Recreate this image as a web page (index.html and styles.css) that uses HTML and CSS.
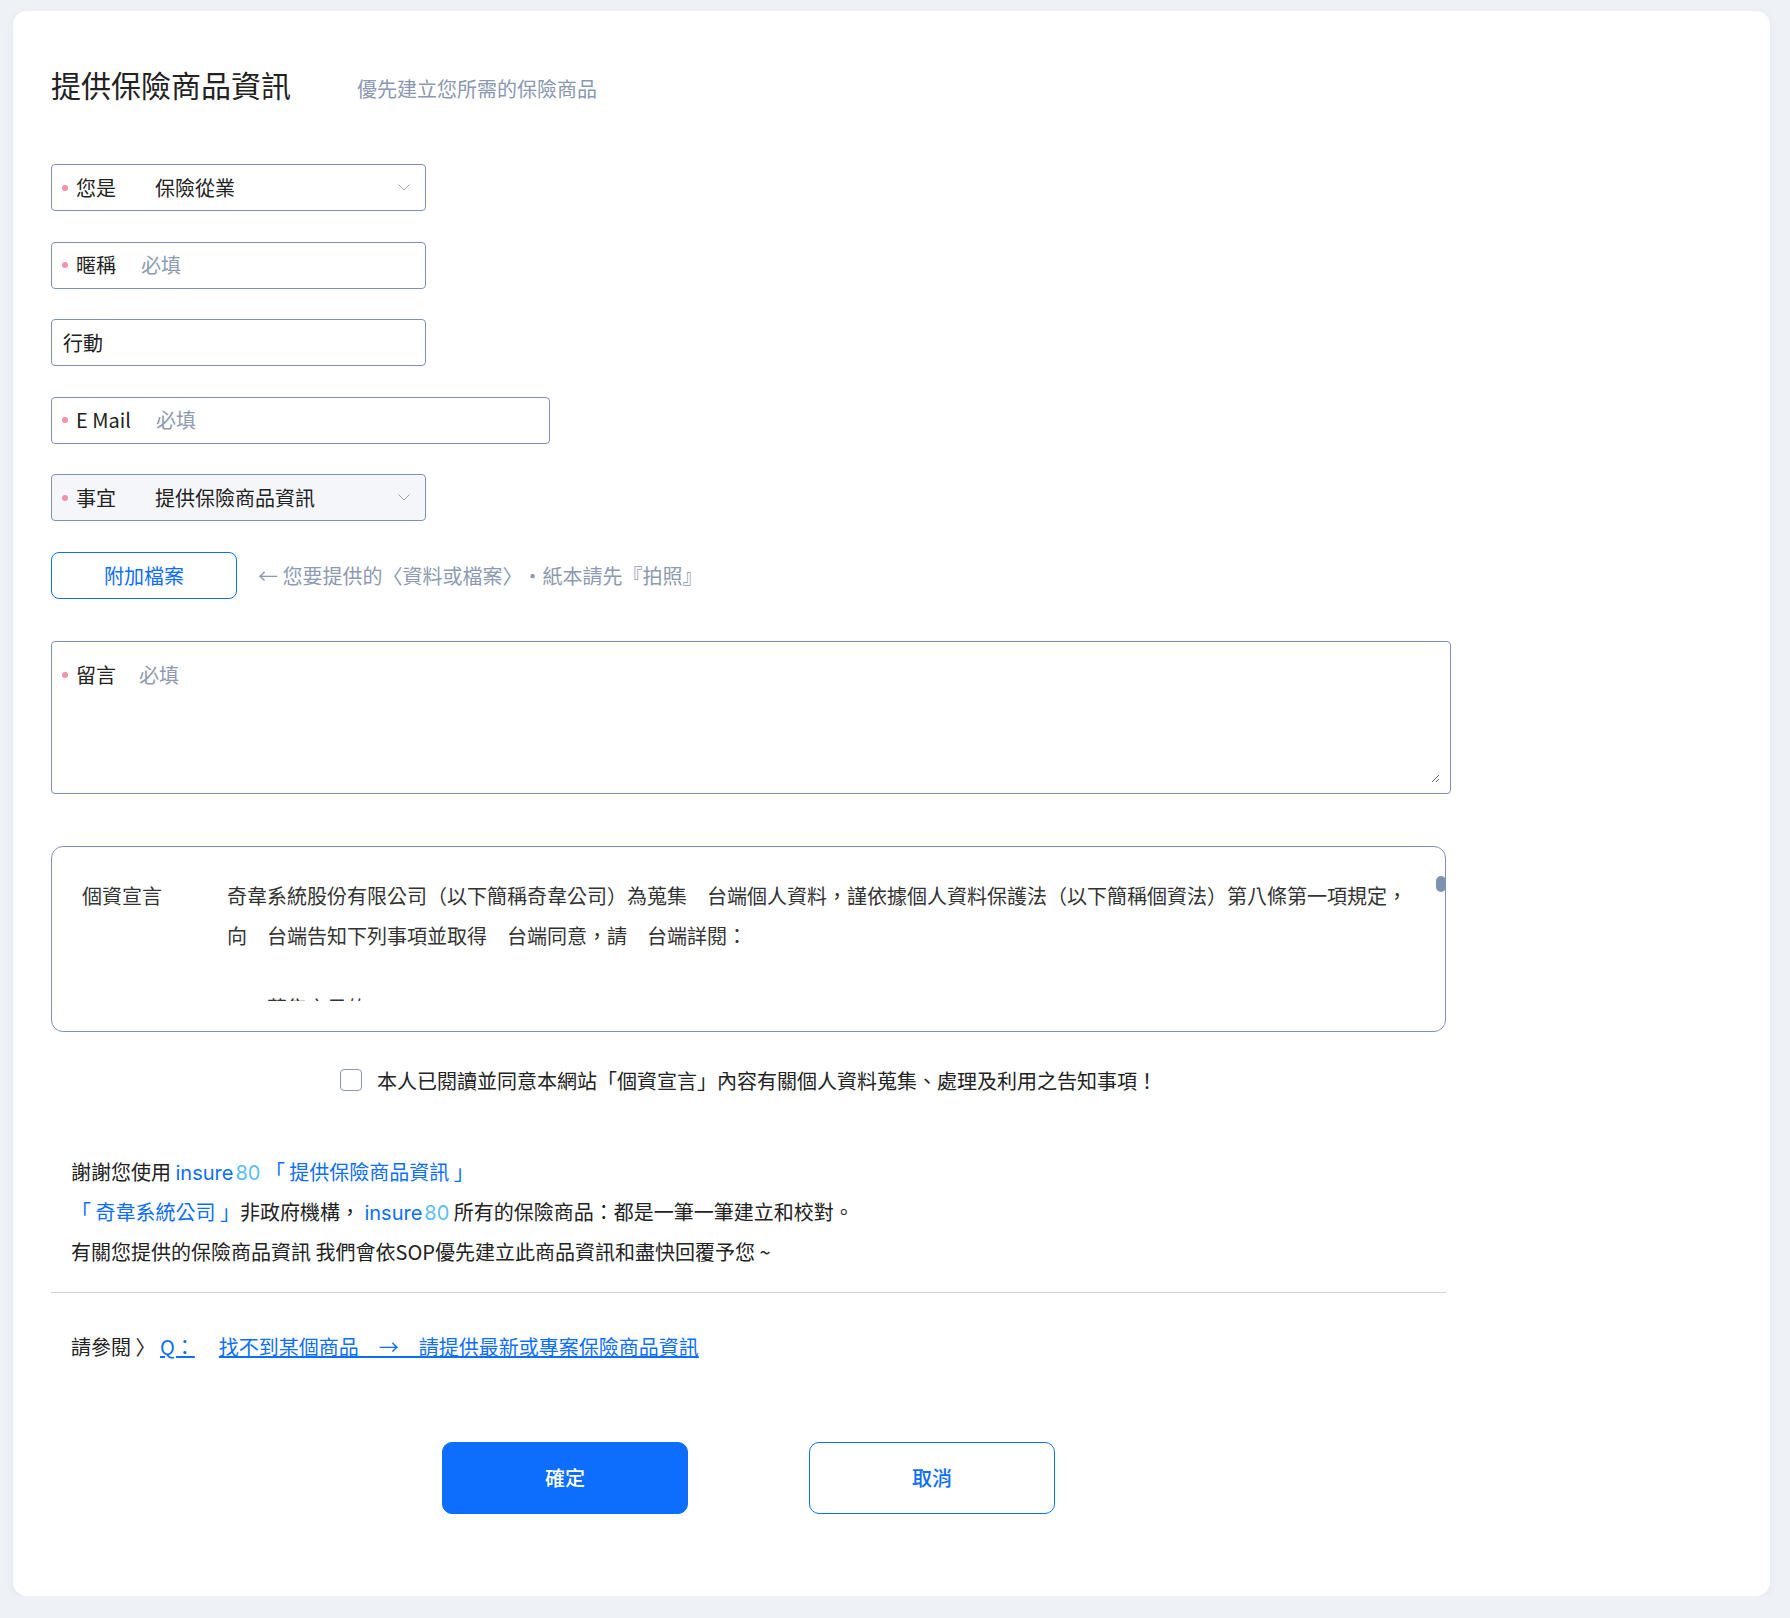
FILE: index.html
```html
<!DOCTYPE html>
<html lang="zh-Hant">
<head>
<meta charset="utf-8">
<title>提供保險商品資訊</title>
<link rel="stylesheet" href="styles.css">
</head>
<body>
<main class="card">
  <header class="head">
    <h1 class="title">提供保險商品資訊</h1>
    <span class="subtitle">優先建立您所需的保險商品</span>
  </header>

  <div class="field select">
    <span class="dot"></span><span class="lbl lbl-sel">您是</span>
    <span class="val">保險從業</span>
    <svg class="chev" width="12" height="7" viewBox="0 0 12 7"><polyline points="0.5,0.5 6,6 11.5,0.5" fill="none" stroke="#9aa4b4" stroke-width="1"/></svg>
  </div>

  <label class="field">
    <span class="dot"></span><span class="lbl">暱稱</span>
    <input type="text" placeholder="必填">
  </label>

  <label class="field plain">
    <input class="dark-ph" type="text" placeholder="行動">
  </label>

  <label class="field wide">
    <span class="dot"></span><span class="lbl">E Mail</span>
    <input type="text" placeholder="必填">
  </label>

  <div class="field select disabled">
    <span class="dot"></span><span class="lbl lbl-sel">事宜</span>
    <span class="val">提供保險商品資訊</span>
    <svg class="chev" width="12" height="7" viewBox="0 0 12 7"><polyline points="0.5,0.5 6,6 11.5,0.5" fill="none" stroke="#9aa4b4" stroke-width="1"/></svg>
  </div>

  <div class="attach">
    <button class="btn-attach" type="button">附加檔案</button>
    <span class="hint">← 您要提供的〈資料或檔案〉・紙本請先『拍照』</span>
  </div>

  <label class="area">
    <span class="dot dot-area"></span><span class="lbl lbl-area">留言</span>
    <textarea placeholder="必填"></textarea>
  </label>

  <section class="privacy">
    <div class="pv-label">個資宣言</div>
    <div class="pv-scroll">
      <p class="lead">奇韋系統股份有限公司（以下簡稱奇韋公司）為蒐集　台端個人資料，謹依據個人資料保護法（以下簡稱個資法）第八條第一項規定，向　台端告知下列事項並取得　台端同意，請　台端詳閱：</p>
      <p class="i1">蒐集之目的：</p>
      <p class="i2">提供保險商品資訊之建立、校對與查詢服務、會員管理、客戶服務、行銷及統計調查與分析。</p>
      <div class="gap"></div>
      <p class="i1">個人資料之類別：</p>
      <p class="i2">姓名、電子郵件、行動電話、職業及其他得以直接或間接方式識別　台端之個人資料。</p>
      <div class="gap"></div>
      <p class="i1">個人資料利用之期間、地區、對象及方式：</p>
      <p class="i2">期間：自　台端同意之日起至蒐集目的消失或本網站停止提供服務之日為止。</p>
      <p class="i2">地區：中華民國境內。</p>
      <p class="i2">對象：奇韋公司及與奇韋公司有業務往來之合作廠商。</p>
      <p class="i2">方式：以自動化或非自動化之方式，於蒐集目的範圍內合理利用。</p>
      <div class="gap"></div>
      <p class="i1">依個資法第三條規定，　台端就　台端之個人資料得行使下列權利：</p>
      <p class="i2">查詢或請求閱覽、請求製給複製本、請求補充或更正、請求停止蒐集、處理或利用、請求刪除。</p>
      <p class="i2">如欲行使上述權利，請以電子郵件與本公司聯繫，本公司將於接獲請求後儘速處理。</p>
      <div class="gap"></div>
      <p class="i1">台端不提供個人資料所致權益之影響：</p>
      <p class="i2">台端得自由選擇是否提供個人資料，若　台端拒絕提供，本網站將無法提供相關服務。</p>
      <div class="gap"></div>
      <p class="i1">本公司將以嚴密之措施保護　台端之個人資料，並依個資法及相關法令規定處理。</p>
      <p class="i2">本告知事項如有修訂，將公告於本網站，不另行個別通知。</p>
      <div class="gap"></div>
      <p class="i1">台端勾選同意即表示已閱讀、瞭解並同意上述告知事項之內容。</p>
    </div>
    <span class="pv-thumb"></span>
  </section>

  <label class="agree">
    <input class="chk" type="checkbox">
    <span>本人已閱讀並同意本網站「個資宣言」內容有關個人資料蒐集、處理及利用之告知事項！</span>
  </label>

  <div class="msgs">
    <p>謝謝您使用 <span class="brand">insure<span class="num">80</span></span> <span class="blue">「 提供保險商品資訊 」</span></p>
    <p><span class="blue">「 奇韋系統公司 」</span>非政府機構， <span class="brand">insure<span class="num">80</span></span> 所有的保險商品：都是一筆一筆建立和校對。</p>
    <p>有關您提供的保險商品資訊 我們會依SOP優先建立此商品資訊和盡快回覆予您 ~</p>
  </div>

  <hr class="sep">

  <p class="ref">請參閱 〉 <a href="#" class="lnk">Q：</a><a href="#" class="lnk lnk2">找不到某個商品　→　請提供最新或專案保險商品資訊</a></p>

  <div class="actions">
    <button class="btn btn-ok" type="button">確定</button>
    <button class="btn btn-cancel" type="button">取消</button>
  </div>
</main>
</body>
</html>
```

FILE: styles.css
```css
html, body {
  margin: 0;
  padding: 0;
}

body {
  background: #eef2f7;
  font-family: "Noto Sans CJK TC", "Inter", sans-serif;
  font-size: 20px;
  color: #222;
  overflow: hidden;
  text-spacing-trim: space-all;
}

.card {
  margin: 11px 20px 0 13px;
  background: #fff;
  border-radius: 14px;
  box-shadow: 0 2px 10px rgba(40, 60, 100, 0.06);
  padding: 50px 38px 82px;
}

.head {
  display: flex;
  align-items: baseline;
  gap: 66px;
  margin-bottom: 57px;
}

.title {
  margin: 0;
  font-size: 30px;
  font-weight: 400;
  line-height: 46px;
  color: #222;
}

.subtitle {
  color: #8a98b0;
  font-size: 20px;
}

.field {
  display: flex;
  align-items: center;
  box-sizing: border-box;
  width: 375px;
  height: 47px;
  border: 1px solid #7f92b3;
  border-radius: 4px;
  padding: 0 15px 0 10px;
  margin-bottom: 30.6px;
  background: #fff;
  line-height: 28px;
}

.field.wide {
  width: 499px;
}

.field.plain {
  padding-left: 11px;
}

.field.disabled {
  background: #f4f6fa;
}

.dot {
  flex: none;
  width: 6px;
  height: 6px;
  border-radius: 50%;
  background: #f592a5;
  margin-right: 8px;
}

.lbl {
  white-space: nowrap;
  color: #222;
  margin-right: 25px;
}

.lbl-sel {
  margin-right: 39px;
}

.val {
  flex: 1;
  color: #222;
}

.chev {
  flex: none;
  display: block;
}

.field input {
  flex: 1;
  min-width: 0;
  border: 0;
  outline: 0;
  padding: 0;
  background: transparent;
  font: inherit;
  color: #222;
}

.field input::placeholder,
.area textarea::placeholder {
  color: #8d9ab0;
}

.field input.dark-ph::placeholder {
  color: #222;
}

.attach {
  display: flex;
  align-items: center;
  margin-bottom: 42.2px;
}

.btn-attach {
  box-sizing: border-box;
  width: 186px;
  height: 47px;
  border: 1px solid #0d6efd;
  border-radius: 8px;
  background: #fff;
  color: #0d6efd;
  font: inherit;
  padding: 0;
}

.hint {
  margin-left: 21px;
  color: #8d9ab0;
}

.area {
  display: flex;
  align-items: flex-start;
  box-sizing: border-box;
  width: 1400px;
  height: 153px;
  border: 1px solid #7f92b3;
  border-radius: 4px;
  padding: 18px 10px 10px 10px;
  margin-bottom: 51.4px;
}

.dot-area {
  margin-top: 12px;
}

.lbl-area {
  line-height: 30px;
  margin-right: 23px;
}

.area textarea {
  flex: 1;
  align-self: stretch;
  border: 0;
  outline: 0;
  padding: 0;
  margin: 0;
  font: inherit;
  line-height: 30px;
  color: #222;
  resize: vertical;
  background: transparent;
}

.privacy {
  position: relative;
  display: flex;
  box-sizing: border-box;
  width: 1395px;
  border: 1px solid #7f92b3;
  border-radius: 12px;
  padding: 29px 0 30px 30px;
}

.pv-label {
  flex: none;
  width: 145px;
  line-height: 40px;
  color: #333;
}

.pv-scroll {
  flex: 1;
  height: 125px;
  overflow: hidden;
  padding-right: 30px;
  line-height: 40px;
  color: #333;
}

.pv-scroll p {
  margin: 0;
}

.pv-scroll .lead {
  margin-bottom: 32px;
}

.pv-scroll .i1 {
  padding-left: 40px;
}

.pv-scroll .i2 {
  padding-left: 80px;
}

.pv-scroll .gap {
  height: 40px;
}

.pv-thumb {
  position: absolute;
  top: 29px;
  right: -1px;
  width: 10px;
  height: 16px;
  border-radius: 5px;
  background: #7f92b3;
}

.agree {
  display: flex;
  align-items: center;
  justify-content: center;
  width: 1395px;
  height: 30px;
  margin-top: 33.5px;
  color: #222;
}

.chk {
  appearance: none;
  -webkit-appearance: none;
  box-sizing: border-box;
  width: 22px;
  height: 22px;
  margin: 0 15px 0 0;
  border: 1px solid #8a99b4;
  border-radius: 4px;
  background: #fff;
}

.msgs {
  margin-top: 56.5px;
  padding-left: 20px;
  line-height: 40px;
}

.msgs p {
  margin: 0;
}

.brand {
  font-family: "Inter", sans-serif;
  line-height: 20px;
  color: #0d6efd;
}

.brand .num {
  color: #5bbdf6;
  margin-left: 2px;
}

.blue {
  color: #0d6efd;
}

.sep {
  box-sizing: border-box;
  width: 1395px;
  height: 0;
  margin: 20px 0 0;
  border: 0;
  border-top: 1px solid #cfd2d7;
}

.ref {
  margin: 34px 0 0;
  padding-left: 20px;
  line-height: 40px;
}

.lnk {
  color: #0d6efd;
  text-decoration: underline;
}

.lnk2 {
  margin-left: 24px;
}

.actions {
  display: flex;
  justify-content: center;
  gap: 121px;
  width: 1395px;
  margin-top: 75px;
}

.btn {
  box-sizing: border-box;
  width: 246px;
  height: 72px;
  border-radius: 10px;
  font: inherit;
  font-size: 20px;
  font-weight: 500;
  padding: 0;
}

.btn-ok {
  background: #0d6efd;
  border: 1px solid #0d6efd;
  color: #fff;
}

.btn-cancel {
  background: #fff;
  border: 1px solid #0d6efd;
  color: #0d6efd;
}
```
